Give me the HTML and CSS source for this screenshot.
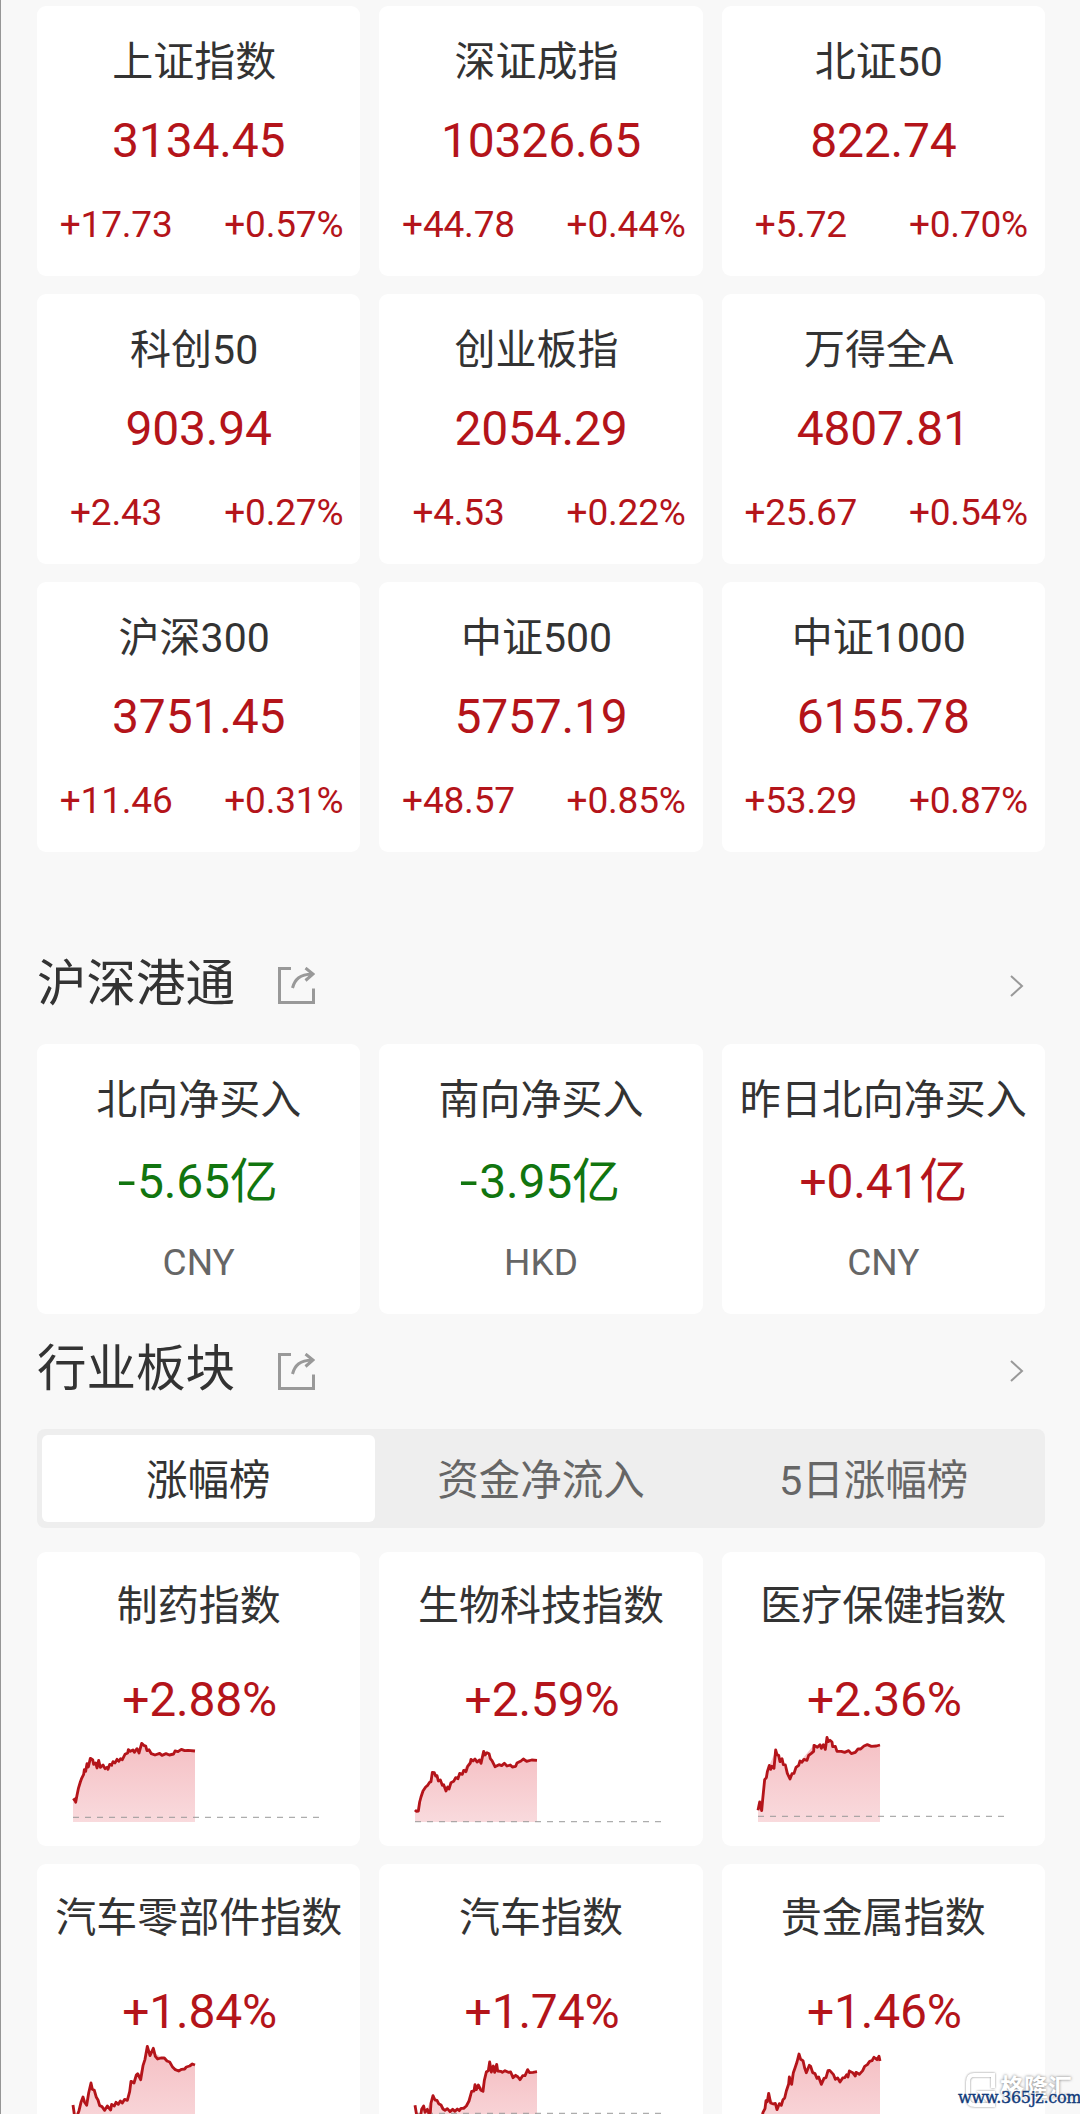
FILE: index.html
```
<!DOCTYPE html>
<html lang="zh-CN">
    <head>
        <meta charset="utf-8">
        <title>行情</title>

        <link rel="stylesheet" href="styles.css">
    </head>

    <body>
        <svg width="0" height="0" class="defs">
            <defs>
                <linearGradient id="area" x1="0" y1="0" x2="0" y2="1">
                    <stop offset="0" stop-color="#f5c0c4"/>
                    <stop offset="1" stop-color="#f9dadd"/>
                </linearGradient>
                <symbol id="share" viewBox="0 0 37 37">
                    <path d="M13 1.500H1.500V35.500H35.500V21.500M14.500 21C17 12 22 7.500 34 7M27.500 1L35 7L27.500 13.500"/>
                </symbol>
                <symbol id="chevron" viewBox="0 0 14 22">
                    <path d="M1 1L12 11L1 21"/>
                </symbol>
            </defs>
        </svg>

        <main>
            <section class="grid">
                <div class="card index"><h3>上证指数</h3><b>3134.45</b><p><span>+17.73</span><span>+0.57%</span></p></div>
                <div class="card index"><h3>深证成指</h3><b>10326.65</b><p><span>+44.78</span><span>+0.44%</span></p></div>
                <div class="card index"><h3>北证50</h3><b>822.74</b><p><span>+5.72</span><span>+0.70%</span></p></div>
                <div class="card index"><h3>科创50</h3><b>903.94</b><p><span>+2.43</span><span>+0.27%</span></p></div>
                <div class="card index"><h3>创业板指</h3><b>2054.29</b><p><span>+4.53</span><span>+0.22%</span></p></div>
                <div class="card index"><h3>万得全A</h3><b>4807.81</b><p><span>+25.67</span><span>+0.54%</span></p></div>
                <div class="card index"><h3>沪深300</h3><b>3751.45</b><p><span>+11.46</span><span>+0.31%</span></p></div>
                <div class="card index"><h3>中证500</h3><b>5757.19</b><p><span>+48.57</span><span>+0.85%</span></p></div>
                <div class="card index"><h3>中证1000</h3><b>6155.78</b><p><span>+53.29</span><span>+0.87%</span></p></div>
            </section>

            <header class="title title-connect">
                <h2>沪深港通</h2>
                <svg class="share"><use href="#share"/></svg>
                <svg class="chevron"><use href="#chevron"/></svg>
            </header>
            <section class="grid">
                <div class="card flow"><h3>北向净买入</h3><b class="down"><i>-</i>5.65亿</b><small>CNY</small></div>
                <div class="card flow"><h3>南向净买入</h3><b class="down"><i>-</i>3.95亿</b><small>HKD</small></div>
                <div class="card flow"><h3>昨日北向净买入</h3><b>+0.41亿</b><small>CNY</small></div>
            </section>

            <header class="title title-sector">
                <h2>行业板块</h2>
                <svg class="share"><use href="#share"/></svg>
                <svg class="chevron"><use href="#chevron"/></svg>
            </header>
            <nav>
                <a class="active">涨幅榜</a>
                <a>资金净流入</a>
                <a>5日涨幅榜</a>
            </nav>
            <section class="grid">
                <div class="card sector">
                    <h3>制药指数</h3><b>+2.88%</b>
                    <svg class="chart" viewBox="0 0 741 255">
                        <path class="area" d="M0 185L8 190L16 155L25 125L35 100L44 80L54 63L75 88L103 94L130 80L150 68L168 42L198 45L208 19L235 50L270 54L300 50L330 40L366 42V255H0Z"/>
                        <path class="base" d="M0 241H741"/>
                        <path class="line" d="M0 190L6 186L8 196L12 175L16 155L22 135L26 124L32 112L34 98L38 103L42 80L46 90L52 64L59 68L62 82L68 78L72 93L77 70L82 91L90 84L96 95L102 91L105 97L110 82L116 85L120 74L126 78L132 67L137 73L143 65L148 68L156 52L164 48L166 38L172 43L180 39L184 46L192 35L198 48L206 19L212 25L218 27L222 41L228 38L235 50L246 54L260 49L267 55L279 50L289 54L302 51L306 42L315 44L325 37L335 41L345 40L366 42"/>
                    </svg>
                </div>
                <div class="card sector">
                    <h3>生物科技指数</h3><b>+2.59%</b>
                    <svg class="chart" viewBox="0 0 741 255">
                        <path class="area" d="M0 222L10 222L16 185L35 150L54 106L93 162L130 120L165 70L198 70L207 45L240 85L300 88L330 67L366 70V255H0Z"/>
                        <path class="base" d="M0 254H741"/>
                        <path class="line" d="M0 219L4 223L10 222L14 195L18 180L24 162L32 150L38 145L44 136L48 134L52 106L58 107L62 117L66 116L70 132L76 129L82 145L86 143L93 162L98 150L102 156L108 137L116 133L122 122L129 125L134 109L142 112L146 100L153 104L158 88L166 78L168 67L174 72L180 66L186 75L194 69L198 79L206 43L210 54L216 47L222 50L226 65L231 71L240 89L252 83L260 86L268 79L276 87L286 84L292 90L302 88L306 78L318 72L325 66L335 73L350 69L366 70"/>
                    </svg>
                </div>
                <div class="card sector">
                    <h3>医疗保健指数</h3><b>+2.36%</b>
                    <svg class="chart" viewBox="0 0 741 255">
                        <path class="area" d="M0 205L12 215L20 130L34 85L54 40L96 125L125 75L167 25L198 32L208 6L237 43L280 47L320 23L366 25V255H0Z"/>
                        <path class="base" d="M0 238H741"/>
                        <path class="line" d="M0 220L5 195L11 221L14 188L20 128L25 122L28 104L34 85L38 97L42 88L48 94L53 39L57 53L62 55L66 74L72 65L76 83L82 84L88 109L96 126L102 110L108 109L114 91L122 85L126 72L132 76L138 67L147 70L152 55L160 49L167 43L168 25L178 31L186 23L190 34L196 23L202 37L207 1L211 14L216 10L222 15L224 29L232 28L237 43L250 43L260 46L272 41L280 50L292 46L300 36L308 36L318 27L328 23L340 28L355 27L366 24"/>
                    </svg>
                </div>
                <div class="card sector">
                    <h3>汽车零部件指数</h3><b>+1.84%</b>
                    <svg class="chart" viewBox="0 0 741 255">
                        <path class="area" d="M0 210L5 195L15 195L32 148L42 155L54 102L80 175L100 182L160 155L175 100L200 75L223 0L275 30L310 63L366 48V255H0Z"/>
                        <path class="base" d="M0 270H741"/>
                        <path class="line" d="M0 168L4 196L12 201L18 185L24 160L30 144L34 158L41 169L47 132L54 102L58 121L64 124L70 145L75 153L80 170L87 173L95 184L103 171L113 183L116 166L124 171L129 160L136 166L142 156L148 162L155 151L163 154L170 128L174 97L183 102L190 78L194 74L203 92L210 50L216 31L223 -8L231 20L241 -2L247 22L254 30L264 27L274 27L282 36L290 39L298 53L307 62L317 66L326 61L335 60L340 54L350 51L358 45L366 48"/>
                    </svg>
                </div>
                <div class="card sector">
                    <h3>汽车指数</h3><b>+1.74%</b>
                    <svg class="chart" viewBox="0 0 741 255">
                        <path class="area" d="M0 205L30 190L54 143L80 175L120 184L160 165L185 108L200 115L224 45L250 65L285 68L315 90L340 68L366 68V255H0Z"/>
                        <path class="base" d="M0 193H741"/>
                        <path class="line" d="M0 169L5 199L17 201L20 181L26 171L30 190L37 181L42 193L46 191L48 162L54 140L60 153L66 154L71 164L78 168L84 180L90 184L97 179L105 188L113 181L120 187L127 180L133 185L138 178L146 178L154 171L162 156L170 127L177 126L180 107L184 122L190 108L198 124L204 127L208 94L214 69L220 65L224 39L229 69L235 51L239 70L245 46L248 66L257 67L262 70L270 65L280 70L287 69L294 86L302 79L309 84L315 92L323 80L330 80L338 62L344 71L354 70L366 68"/>
                    </svg>
                </div>
                <div class="card sector">
                    <h3>贵金属指数</h3><b>+1.46%</b>
                    <svg class="chart" viewBox="0 0 741 255">
                        <path class="area" d="M0 255L14 195L32 140L60 180L82 150L100 80L123 20L145 65L160 55L190 105L212 60L245 100L275 75L305 75L340 35L366 32V255Z"/>
                        <path class="base" d="M0 270H741"/>
                        <path class="line" d="M8 225L15 190L21 179L24 155L28 158L32 133L38 162L46 165L52 163L57 182L64 164L70 169L75 152L80 147L85 126L92 105L94 84L101 106L106 71L111 57L117 39L123 15L128 31L135 35L140 57L145 71L154 49L158 52L164 71L171 74L177 88L182 84L190 106L198 88L204 86L210 65L215 64L226 76L232 91L239 87L246 99L254 87L260 86L266 77L270 84L274 66L284 71L292 81L294 70L304 76L314 65L320 52L328 47L335 37L342 35L348 25L357 32L363 22L366 36"/>
                    </svg>
                </div>
            </section>
        </main>

        <div class="brand">
            <svg viewBox="0 0 31 36">
                <path d="M28 15V2H9Q3 2 3 9V25Q3 32 10 32H28V20H16L25 29"/>
            </svg>
            <span>格隆汇</span>
        </div>
        <div class="site">www.365jz.com</div>
    </body>
</html>
```
FILE: styles.css
```
* {
    box-sizing: border-box;
    margin: 0;
}

body {
    position: relative;
    height: 2114px;
    overflow: hidden;
    background-color: #f8f8f8;
    border-left: 1px solid #969696;
    color: #333;
    font-family: Roboto, "Noto Sans CJK SC", sans-serif;
}

.defs {
    position: absolute;
}

main {
    padding: 6px 35px 0 36px;
}

.grid {
    display: grid;
    grid-template-columns: repeat(3, 1fr);
    gap: 18px 19px;
}

.card {
    height: 270px;
    padding-top: 26px;
    display: flex;
    flex-direction: column;
    align-items: center;
    background-color: #fff;
    border-radius: 9px;
    white-space: nowrap;
}

h3 {
    font-size: 41px;
    line-height: 60px;
    font-weight: 400;
}

.index h3 {
    margin-right: 9px;
}

b {
    margin-top: 19px;
    color: #b4141a;
    font-size: 48px;
    line-height: 60px;
    font-weight: 400;
    letter-spacing: -.2px;
}

b.down {
    color: #11750f;
}

/* wider minus sign */
b i {
    display: inline-block;
    margin-right: 4px;
    font-style: normal;
    transform: scaleX(1.35);
}

.card p {
    align-self: stretch;
    display: flex;
    justify-content: space-between;
    margin-top: 30px;
    padding-right: 17px;
    color: #b4141a;
    font-size: 37px;
    line-height: 48px;
    letter-spacing: -.2px;
}

.card p span:first-child {
    flex: 1;
    padding-right: 29px;
    text-align: center;
}

.flow b {
    margin-top: 22px;
}

small {
    margin-top: 27px;
    color: #666;
    font-size: 37px;
    line-height: 48px;
}

.title {
    display: flex;
    align-items: center;
}

.title-connect {
    height: 192px;
    padding-top: 75px;
}

.title-sector {
    height: 115px;
    padding-bottom: 1px;
}

h2 {
    width: 241px;
    margin-top: -4px;
    font-size: 49.5px;
    line-height: 60px;
    font-weight: 400;
}

.share,
.chevron {
    fill: none;
    stroke: #999;
}

.share {
    width: 37px;
    height: 37px;
    stroke-width: 3;
}

.chevron {
    width: 14px;
    height: 22px;
    margin: 0 21px 0 auto;
    stroke-width: 2;
}

nav {
    display: flex;
    height: 99px;
    margin-bottom: 24px;
    padding: 6px 5px;
    background-color: #eee;
    border-radius: 8px;
}

nav a {
    flex: 1;
    padding-top: 2px;
    border-radius: 6px;
    color: #666;
    font-size: 41.5px;
    line-height: 87px;
    text-align: center;
}

nav a.active {
    background-color: #fff;
    color: #333;
}

.sector {
    height: 294px;
    padding-top: 24px;
}

.sector b {
    margin: 34px 0 0 2px;
}

.chart {
    width: 247px;
    height: 85px;
    margin-top: 7px;
    margin-right: 4px;
    overflow: visible;
}

.area {
    fill: url(#area);
}

.base {
    fill: none;
    stroke: #999;
    stroke-opacity: .8;
    stroke-width: 4;
    stroke-dasharray: 18 18;
}

.line {
    fill: none;
    stroke: #b4141a;
    stroke-width: 8.5;
    stroke-linejoin: round;
}

/* watermarks in the bottom corner */
.brand {
    position: absolute;
    left: 964px;
    top: 2073px;
    display: flex;
    align-items: center;
    gap: 4px;
    color: #fff;
    font-size: 24px;
    font-weight: 700;
    line-height: 30px;
    text-shadow: 0 0 3px #777;
}

.brand svg {
    width: 31px;
    height: 36px;
    fill: none;
    stroke: #fff;
    stroke-width: 4;
    filter: drop-shadow(0 0 1px #888);
}

.brand span {
    margin-top: -6px;
}

.site {
    position: absolute;
    left: 957px;
    top: 2087px;
    color: #123b7a;
    font-family: "DejaVu Serif", serif;
    font-size: 16px;
    line-height: 22px;
    letter-spacing: -.3px;
    -webkit-text-stroke: .4px #123b7a;
    text-shadow: 0 0 2px #fff, 0 0 2px #fff;
}
```
